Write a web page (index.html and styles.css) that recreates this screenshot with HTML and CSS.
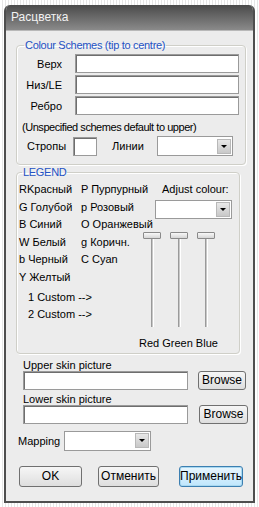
FILE: index.html
```html
<!DOCTYPE html>
<html lang="ru">
<head>
    <meta charset="UTF-8">
    <title>Расцветка</title>
    <link rel="stylesheet" href="styles.css">
</head>
<body>
    <div class="window">
        <div class="titlebar">Расцветка</div>
        <div class="client">
            <fieldset class="group group--schemes">
                <legend>Colour Schemes (tip to centre)</legend>
                <div class="scheme-row">
                    <span class="scheme-label">Верх</span>
                    <span class="edit edit--scheme"></span>
                </div>
                <div class="scheme-row">
                    <span class="scheme-label">Низ/LE</span>
                    <span class="edit edit--scheme"></span>
                </div>
                <div class="scheme-row">
                    <span class="scheme-label">Ребро</span>
                    <span class="edit edit--scheme"></span>
                </div>
                <div class="note">(Unspecified schemes default to upper)</div>
                <div class="lines-row">
                    <span class="lines-label">Стропы</span>
                    <span class="edit edit--small"></span>
                    <span class="lines-label lines-label--second">Линии</span>
                    <span class="combo combo--lines"><span class="combo-btn"></span></span>
                </div>
            </fieldset>

            <fieldset class="group group--legend">
                <legend>LEGEND</legend>
                <div class="legend-body">
                    <div class="legend-col">
                        <div>RKрасный</div>
                        <div>G Голубой</div>
                        <div>B Синий</div>
                        <div>W Белый</div>
                        <div>b Черный</div>
                        <div>Y Желтый</div>
                        <div class="custom custom--first">1 Custom --&gt;</div>
                        <div class="custom">2 Custom --&gt;</div>
                    </div>
                    <div class="legend-col legend-col--mid">
                        <div>P Пурпурный</div>
                        <div>p Розовый</div>
                        <div>O Оранжевый</div>
                        <div>g Коричн.</div>
                        <div>C Cyan</div>
                    </div>
                    <div class="adjust">
                        <div class="adjust-title">Adjust colour:</div>
                        <span class="combo combo--adjust"><span class="combo-btn"></span></span>
                        <div class="sliders">
                            <div class="slider"><span class="thumb"></span><span class="track"></span></div>
                            <div class="slider"><span class="thumb"></span><span class="track"></span></div>
                            <div class="slider"><span class="thumb"></span><span class="track"></span></div>
                        </div>
                        <div class="rgb">Red Green Blue</div>
                    </div>
                </div>
            </fieldset>

            <div class="skin">
                <div class="skin-label">Upper skin picture</div>
                <div class="skin-row">
                    <span class="edit edit--skin"></span>
                    <button class="btn btn--browse">Browse</button>
                </div>
                <div class="skin-label">Lower skin picture</div>
                <div class="skin-row">
                    <span class="edit edit--skin"></span>
                    <button class="btn btn--browse btn--browse2">Browse</button>
                </div>
            </div>

            <div class="mapping">
                <span>Mapping</span>
                <span class="combo combo--mapping"><span class="combo-btn"></span></span>
            </div>

            <div class="actions">
                <button class="btn btn--ok">OK</button>
                <button class="btn btn--cancel">Отменить</button>
                <button class="btn btn--apply">Применить</button>
            </div>
        </div>
    </div>
</body>
</html>
```

FILE: styles.css
```css
:root {
    --face: #ececec;
    --frame: #4e4e4e;
    --group-line: #cfcfc8;
    --legend: #2452c4;
    --text: #000;
}

html, body {
    margin: 0;
    height: 100%;
}

body {
    background: repeating-linear-gradient(90deg, #ffffff 0 2px, #e6e6e6 2px 3px);
    font-family: "Liberation Sans", Arial, sans-serif;
    font-size: 11px;
    color: var(--text);
    padding: 5px 4px 0 4px;
    box-sizing: border-box;
}

.window {
    width: 251px;
    height: 498px;
    box-sizing: border-box;
    border: 2px solid var(--frame);
    border-top: none;
    border-radius: 6px 6px 0 0;
    background: var(--face);
    display: flex;
    flex-direction: column;
    overflow: hidden;
}

.titlebar {
    height: 25px;
    line-height: 25px;
    padding-left: 5px;
    background: linear-gradient(#4a4a4a, #8a8a8a);
    color: #f2f2f2;
    font-size: 12px;
    flex-shrink: 0;
}

.client {
    flex: 1;
    padding: 8px 6px 0 10px;
    border-top: 1px solid #b8b8b8;
}

.group {
    margin: 0;
    border: 1px solid var(--group-line);
    border-radius: 4px;
    box-shadow: 1px 1px 0 #fff inset, 1px 1px 0 #fff;
    min-inline-size: 0;
}

.group legend {
    color: var(--legend);
    padding: 0 1px;
    margin-left: 3px;
    font-size: 11px;
    letter-spacing: -0.3px;
}

.group--schemes {
    width: 230px;
    box-sizing: border-box;
    padding: 3px 6px 8px 4px;
}

.scheme-row {
    display: flex;
    align-items: center;
    margin-bottom: 2px;
}

.scheme-label {
    width: 41px;
    flex-shrink: 0;
    text-align: right;
    margin-right: 13px;
}

.edit {
    display: block;
    flex-shrink: 0;
    background: #fff;
    border: 1px solid #9a9a9a;
    box-shadow: 1px 1px 0 #6e6e6e inset;
    box-sizing: border-box;
}

.edit--scheme {
    width: 164px;
    height: 19px;
}

.note {
    margin: 6px 0 0 1px;
    letter-spacing: -0.45px;
    white-space: nowrap;
}

.lines-row {
    display: flex;
    align-items: center;
    margin-top: 3px;
}

.lines-label {
    flex-shrink: 0;
    margin-left: 6px;
    margin-right: 7px;
}

.lines-label--second {
    margin-left: 15px;
    margin-right: 0;
    width: 45px;
}

.edit--small {
    width: 24px;
    height: 19px;
}

.combo {
    display: flex;
    flex-shrink: 0;
    justify-content: flex-end;
    align-items: center;
    background: #fff;
    border: 1px solid #9a9a9a;
    box-sizing: border-box;
    padding-right: 1px;
}

.combo-btn {
    width: 14px;
    height: 15px;
    background: linear-gradient(#e8e8e8, #c8c8c8);
    border: 1px solid #b8b8b8;
    box-sizing: border-box;
    position: relative;
}

.combo-btn::after {
    content: "";
    position: absolute;
    left: 3px;
    top: 5px;
    border-left: 3px solid transparent;
    border-right: 3px solid transparent;
    border-top: 3px solid #000;
}

.combo--lines {
    width: 76px;
    height: 20px;
}

.group--legend {
    width: 224px;
    box-sizing: border-box;
    margin-top: 1px;
    padding: 3px 4px 4px 2px;
}

.legend-body {
    display: flex;
}

.legend-col div {
    height: 17.6px;
    line-height: 17.6px;
    white-space: nowrap;
}

.legend-col {
    width: 62px;
    flex-shrink: 0;
}

.legend-col .custom {
    margin-left: 9px;
}

.legend-col .custom--first {
    margin-top: 2px;
}

.legend-col--mid {
    width: 74px;
}

.adjust {
    display: flex;
    flex-direction: column;
    align-items: flex-start;
}

.adjust-title {
    height: 17.6px;
    line-height: 17.6px;
    margin-left: 7px;
    white-space: nowrap;
}

.combo--adjust {
    width: 77px;
    height: 19px;
    margin-top: 1px;
}

.sliders {
    display: flex;
    gap: 9px;
    margin-top: 13px;
    margin-left: -12px;
}

.slider {
    width: 18px;
    display: flex;
    flex-direction: column;
    align-items: center;
}

.thumb {
    width: 18px;
    height: 7px;
    border: 1px solid #8a8a8a;
    border-radius: 1px;
    background: linear-gradient(#f8f8f8, #d6d6d6);
    box-sizing: border-box;
}

.track {
    width: 3px;
    height: 88px;
    background: #c8c8c8;
    border-left: 1px solid #9a9a9a;
    border-right: 1px solid #fff;
    box-sizing: border-box;
}

.rgb {
    margin: 10px 0 0 -16px;
    white-space: nowrap;
}

.skin {
    padding: 5px 0 0 7px;
}

.skin-label {
    height: 12px;
    line-height: 12px;
}

.skin-row {
    display: flex;
    align-items: center;
    height: 19px;
    margin: 0 0 3px 0;
}

.edit--skin {
    width: 165px;
    height: 19px;
}

.btn {
    font-family: "Liberation Sans", Arial, sans-serif;
    font-size: 12px;
    background: linear-gradient(#f6f6f6, #dedede);
    border: 1px solid #707070;
    border-radius: 3px;
    padding: 0;
    color: #000;
    flex-shrink: 0;
}

.btn--browse {
    width: 48px;
    height: 19px;
    margin-left: 10px;
}

.btn--browse2 {
    width: 49px;
    margin-left: 11px;
}

.mapping {
    display: flex;
    align-items: center;
    padding: 4px 0 0 2px;
}

.combo--mapping {
    width: 87px;
    height: 20px;
    margin-left: 4px;
}

.actions {
    display: flex;
    padding: 15px 0 0 3px;
}

.btn--ok {
    width: 63px;
    height: 21px;
}

.btn--cancel {
    width: 61px;
    height: 21px;
    margin-left: 16px;
}

.btn--apply {
    width: 64px;
    height: 21px;
    margin-left: 20px;
    border-color: #3c7fb1;
    box-shadow: 0 0 0 1px #a8d8f0 inset;
    background: linear-gradient(#eaf6fd, #bee6fd);
}
```
